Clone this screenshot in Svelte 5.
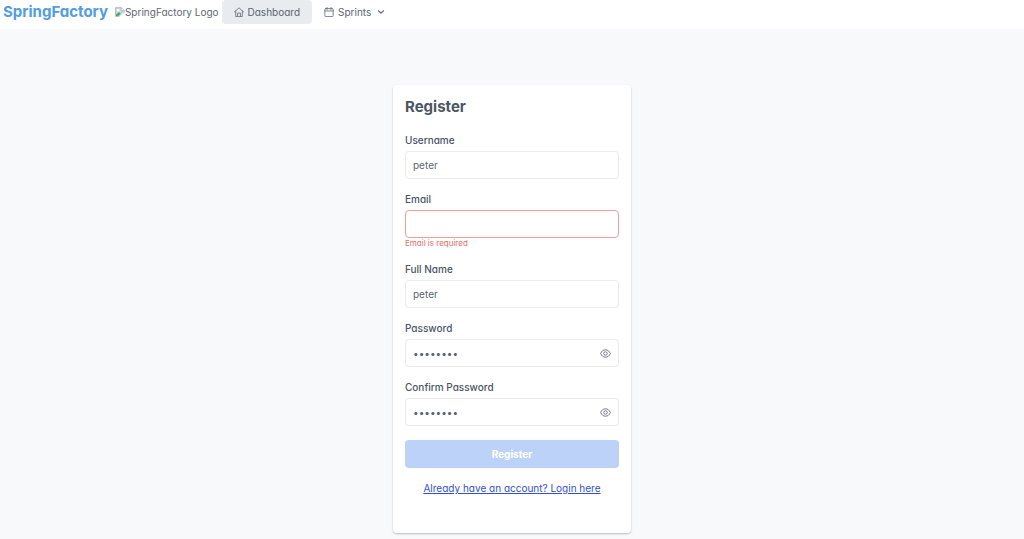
<script>
  let username = "peter";
  let email = "";
  let fullName = "peter";
  let password = "password";
  let confirmPassword = "password";

  let showPassword = false;
  let showConfirm = false;

  $: valid = username && email && fullName && password && password === confirmPassword;
</script>

<style>
  :global(body) {
    background-color: #f8f9fb;
    color: #4b5563;
    font-family: Inter, sans-serif;
    font-feature-settings: "cv11";
    font-size: 10px;
    line-height: 12px;
  }

  header {
    display: flex;
    align-items: flex-start;
    height: 29px;
    padding: 0 3px;
    background-color: white;
  }

  nav {
    display: flex;
    align-items: center;
  }

  .brand,
  .logo {
    display: flex;
    align-items: center;
    height: 24px;
  }

  .brand {
    margin-right: 7px;
    color: #4f9bec;
    font-size: 15px;
    font-weight: 700;
    text-decoration: none;
  }

  .logo {
    margin-right: 3px;
    color: #5f6672;
  }

  .item {
    display: flex;
    align-items: center;
    gap: 4px;
    height: 24px;
    padding: 0 12px;
    border: 0;
    border-radius: 4px;
    background: none;
    color: #5b6472;
    font: inherit;
    font-feature-settings: inherit;
    text-decoration: none;
    cursor: pointer;
  }

  .item.active {
    background-color: #e9ecef;
  }

  .item svg {
    color: #6b7280;
  }

  .item .chevron {
    margin-left: 2px;
  }

  .card {
    box-sizing: border-box;
    width: 238px;
    margin: 56px auto 6px;
    padding: 12px 12px 39px;
    border-radius: 4px;
    background-color: white;
    box-shadow: 0 1px 2px rgba(0, 0, 0, 0.25);
  }

  h1 {
    margin: 0 0 17px;
    font-size: 15px;
    font-weight: 700;
    line-height: 20px;
  }

  .field {
    display: flex;
    flex-direction: column;
    margin-bottom: 14px;
  }

  label {
    margin-bottom: 5px;
    font-weight: 500;
  }

  input {
    box-sizing: border-box;
    width: 100%;
    height: 28px;
    padding: 0 7px;
    border: 1px solid #e8eaee;
    border-radius: 4px;
    outline: 0;
    background-color: white;
    color: #5b6472;
    font: inherit;
    font-feature-settings: inherit;
  }

  input.invalid {
    border-color: #f0a09c;
  }

  .error {
    color: #e0706b;
    font-size: 8px;
    line-height: 11px;
  }

  .password {
    position: relative;
  }

  .toggle {
    position: absolute;
    top: 0;
    right: 8px;
    display: flex;
    align-items: center;
    height: 100%;
    padding: 0;
    border: 0;
    background: none;
    color: #6b7280;
    cursor: pointer;
  }

  .submit {
    width: 100%;
    height: 28px;
    border: 0;
    border-radius: 4px;
    background-color: #3b82f6;
    color: white;
    font: inherit;
    font-feature-settings: inherit;
    font-weight: 700;
  }

  .submit:disabled {
    background-color: #bdd2f9;
  }

  .login {
    margin: 14px 0 0;
    text-align: center;
  }

  .login a {
    color: #2f50d8;
  }
</style>

<header>
  <a class="brand" href="/">SpringFactory</a>
  <span class="logo">
    <svg width="10" height="10" viewBox="0 0 16 16">
      <path d="M1 1h9l5 5v9H1z" fill="#c6d9f5" stroke="#9a9a9a" />
      <path d="M10 1v5h5" fill="white" stroke="#9a9a9a" />
      <circle cx="5" cy="5" r="2" fill="white" />
      <path d="M1.500 14.500V12l5-4 3 2.500-4 4z" fill="#4caf50" />
      <path d="M6 16L16 8v8z" fill="white" />
    </svg>
    SpringFactory Logo
  </span>
  <nav>
    <a class="item active" href="/">
      <svg width="10" height="10" viewBox="0 0 14 14" fill="none" stroke="currentColor" stroke-width="1.200" stroke-linecap="round" stroke-linejoin="round">
        <path d="M.6 6.900L7 1.100l6.400 5.800M2.400 5.500v7.900h9.200V5.500M5 13.200V8.500h4v4.700" />
      </svg>
      Dashboard
    </a>
    <button class="item" type="button">
      <svg width="10" height="10" viewBox="0 0 14 14" fill="none" stroke="currentColor" stroke-width="1.200" stroke-linecap="round" stroke-linejoin="round">
        <rect x="1.200" y="2.200" width="11.600" height="11.200" rx="1.200" />
        <path d="M1.200 5.500h11.600M4.200.6v3M9.800.6v3" />
      </svg>
      Sprints
      <svg class="chevron" width="8" height="8" viewBox="0 0 14 14" fill="none" stroke="currentColor" stroke-width="2" stroke-linecap="round" stroke-linejoin="round">
        <path d="M2.500 4.800l4.500 4.400 4.500-4.400" />
      </svg>
    </button>
  </nav>
</header>

{#snippet eye()}
  <svg width="11" height="11" viewBox="0 0 14 14" fill="none" stroke="currentColor" stroke-width="1.200">
    <path d="M.8 7C2 4 4.200 2.300 7 2.300S12 4 13.200 7C12 10 9.800 11.700 7 11.700S2 10 .8 7z" />
    <circle cx="7" cy="7" r="2.200" />
  </svg>
{/snippet}

<main>
  <form class="card" on:submit|preventDefault>
    <h1>Register</h1>
    <div class="field">
      <label for="username">Username</label>
      <input id="username" type="text" bind:value={username}>
    </div>
    <div class="field">
      <label for="email">Email</label>
      <input id="email" type="text" class:invalid={!email} bind:value={email}>
      {#if !email}
        <span class="error">Email is required</span>
      {/if}
    </div>
    <div class="field">
      <label for="fullName">Full Name</label>
      <input id="fullName" type="text" bind:value={fullName}>
    </div>
    <div class="field">
      <label for="password">Password</label>
      <div class="password">
        <input id="password" type={showPassword ? "text" : "password"} value={password} on:input={(e) => (password = e.target.value)}>
        <button class="toggle" type="button" aria-label="Show password" on:click={() => (showPassword = !showPassword)}>
          {@render eye()}
        </button>
      </div>
    </div>
    <div class="field">
      <label for="confirmPassword">Confirm Password</label>
      <div class="password">
        <input id="confirmPassword" type={showConfirm ? "text" : "password"} value={confirmPassword} on:input={(e) => (confirmPassword = e.target.value)}>
        <button class="toggle" type="button" aria-label="Show password" on:click={() => (showConfirm = !showConfirm)}>
          {@render eye()}
        </button>
      </div>
    </div>
    <button class="submit" disabled={!valid}>Register</button>
    <p class="login"><a href="/login">Already have an account? Login here</a></p>
  </form>
</main>
